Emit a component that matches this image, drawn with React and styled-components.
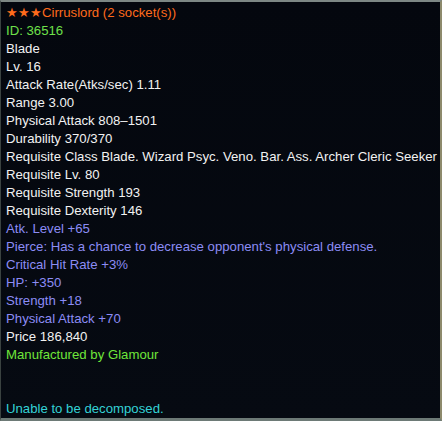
import React from "react"
import styled, { createGlobalStyle } from "styled-components"

const GlobalStyle = createGlobalStyle`
  html, body {
    margin: 0;
    padding: 0;
    background: #05080f;
  }
`

const lines = [
  { text: "★★★Cirruslord (2 socket(s))", tone: "orange" },
  { text: "ID: 36516", tone: "green" },
  { text: "Blade" },
  { text: "Lv. 16" },
  { text: "Attack Rate(Atks/sec) 1.11" },
  { text: "Range 3.00" },
  { text: "Physical Attack 808–1501" },
  { text: "Durability 370/370" },
  { text: "Requisite Class Blade. Wizard Psyc. Veno. Bar. Ass. Archer Cleric Seeker" },
  { text: "Requisite Lv. 80" },
  { text: "Requisite Strength 193" },
  { text: "Requisite Dexterity 146" },
  { text: "Atk. Level +65", tone: "purple" },
  { text: "Pierce: Has a chance to decrease opponent's physical defense.", tone: "purple" },
  { text: "Critical Hit Rate +3%", tone: "purple" },
  { text: "HP: +350", tone: "purple" },
  { text: "Strength +18", tone: "purple" },
  { text: "Physical Attack +70", tone: "purple" },
  { text: "Price 186,840" },
  { text: "Manufactured by Glamour", tone: "lime" },
  { text: "" },
  { text: "" },
  { text: "Unable to be decomposed.", tone: "cyan" },
]

const tones = {
  white: "#f2f2f2",
  orange: "#ff6b1c",
  green: "#6ee04a",
  purple: "#8c8cf5",
  lime: "#6fe63a",
  cyan: "#34d2d6",
}

const Tooltip = styled.div`
  width: 442px;
  height: 421px;
  box-sizing: border-box;
  background: linear-gradient(180deg, #04070e 0%, #060a12 100%);
  border-top: 2px solid #7d8784;
  border-bottom: 3px solid #6d7a76;
  border-left: 1px solid #3a4240;
  border-right: 2px solid #8d8a6c;
  padding: 2px 0 0 5px;
  font-family: "Liberation Sans", Arial, sans-serif;
  font-size: 13.2px;
`

const Line = styled.div`
  height: 18px;
  line-height: 18px;
  white-space: nowrap;
  color: ${(p) => tones[p.tone] || tones.white};
`

const App = () => (
  <>
    <GlobalStyle />
    <Tooltip>
      {lines.map((l, i) => (
        <Line key={i} tone={l.tone}>
          {l.text || "\u00a0"}
        </Line>
      ))}
    </Tooltip>
  </>
)

export default App
